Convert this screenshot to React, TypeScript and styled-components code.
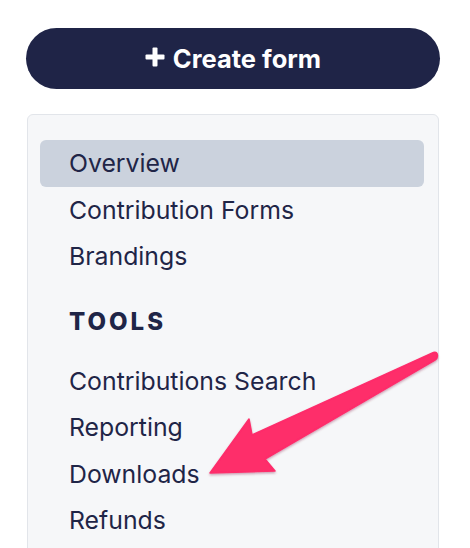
import React, { FC } from 'react';
import styled, { createGlobalStyle } from 'styled-components';

const GlobalStyle = createGlobalStyle`
    html, body {
        margin: 0;
        padding: 0;
        background: #ffffff;
    }
    body {
        font-family: Inter, "Noto Sans", sans-serif;
        color: #1f2547;
    }
`;

const mainItems = ['Overview', 'Contribution Forms', 'Brandings'];
const toolItems = ['Contributions Search', 'Reporting', 'Downloads', 'Refunds'];

const Arrow: FC = () => (
    <ArrowSvg width="470" height="548" viewBox="0 0 470 548">
        <defs>
            <filter id="arrowShadow" x="-10%" y="-10%" width="120%" height="130%">
                <feDropShadow dx="0" dy="1.5" stdDeviation="1.2" floodColor="#7a1030" floodOpacity="0.35" />
            </filter>
        </defs>
        <path
            d="M210 473 L249 419 L252 435 L433.5 352.5 Q437.5 351.5 437.5 356 Q437.5 358.5 435 360 L265 459 L275 471 Z"
            fill="#fe2d6b"
            stroke="#fe2d6b"
            strokeWidth="1.5"
            strokeLinejoin="round"
            filter="url(#arrowShadow)"
        />
    </ArrowSvg>
);

const App: FC = () => (
    <Page>
        <GlobalStyle />
        <CreateButton>
            <Plus>
                <svg width="20" height="20" viewBox="0 0 20 20">
                    <rect x="7.5" y="0.5" width="5" height="19" rx="1" fill="#fff" />
                    <rect x="0.5" y="7.5" width="19" height="5" rx="1" fill="#fff" />
                </svg>
            </Plus>
            Create form
        </CreateButton>
        <Panel>
            {mainItems.map((item, i) => (
                <NavItem key={item} active={i === 0}>
                    {item}
                </NavItem>
            ))}
            <SectionTitle>TOOLS</SectionTitle>
            {toolItems.map(item => (
                <NavItem key={item}>{item}</NavItem>
            ))}
        </Panel>
        <Arrow />
    </Page>
);

const Page = styled.div`
    position: relative;
    width: 470px;
    height: 548px;
    overflow: hidden;
    padding: 28px 30px 0 26px;
    box-sizing: border-box;
`;

const CreateButton = styled.div`
    display: flex;
    align-items: center;
    justify-content: center;
    gap: 8px;
    height: 61px;
    border-radius: 31px;
    background: #1f2447;
    color: #ffffff;
    font-size: 25.5px;
    font-weight: 700;
`;

const Plus = styled.span`
    display: flex;
    margin-top: -3px;
`;

const Panel = styled.div`
    margin-top: 25px;
    margin-left: 1px;
    margin-right: 1px;
    padding: 25px 14px 20px 12px;
    border: 1px solid #e2e5ea;
    border-radius: 6px;
    background: #f6f7f9;
    height: 600px;
`;

const NavItem = styled.div<{ active?: boolean }>`
    display: flex;
    align-items: center;
    height: 46.5px;
    padding-left: 29px;
    border-radius: 6px;
    font-size: 24.8px;
    font-weight: 400;
    color: #1f2547;
    background: ${({ active }) => (active ? '#cbd2dd' : 'transparent')};
`;

const SectionTitle = styled.div`
    display: flex;
    align-items: center;
    height: 34px;
    margin: 25px 0 19px;
    padding-left: 29px;
    font-size: 24px;
    font-weight: 800;
    letter-spacing: 3px;
    color: #1f2547;
`;

const ArrowSvg = styled.svg`
    position: absolute;
    left: 0;
    top: 0;
    pointer-events: none;
`;

export default App;
